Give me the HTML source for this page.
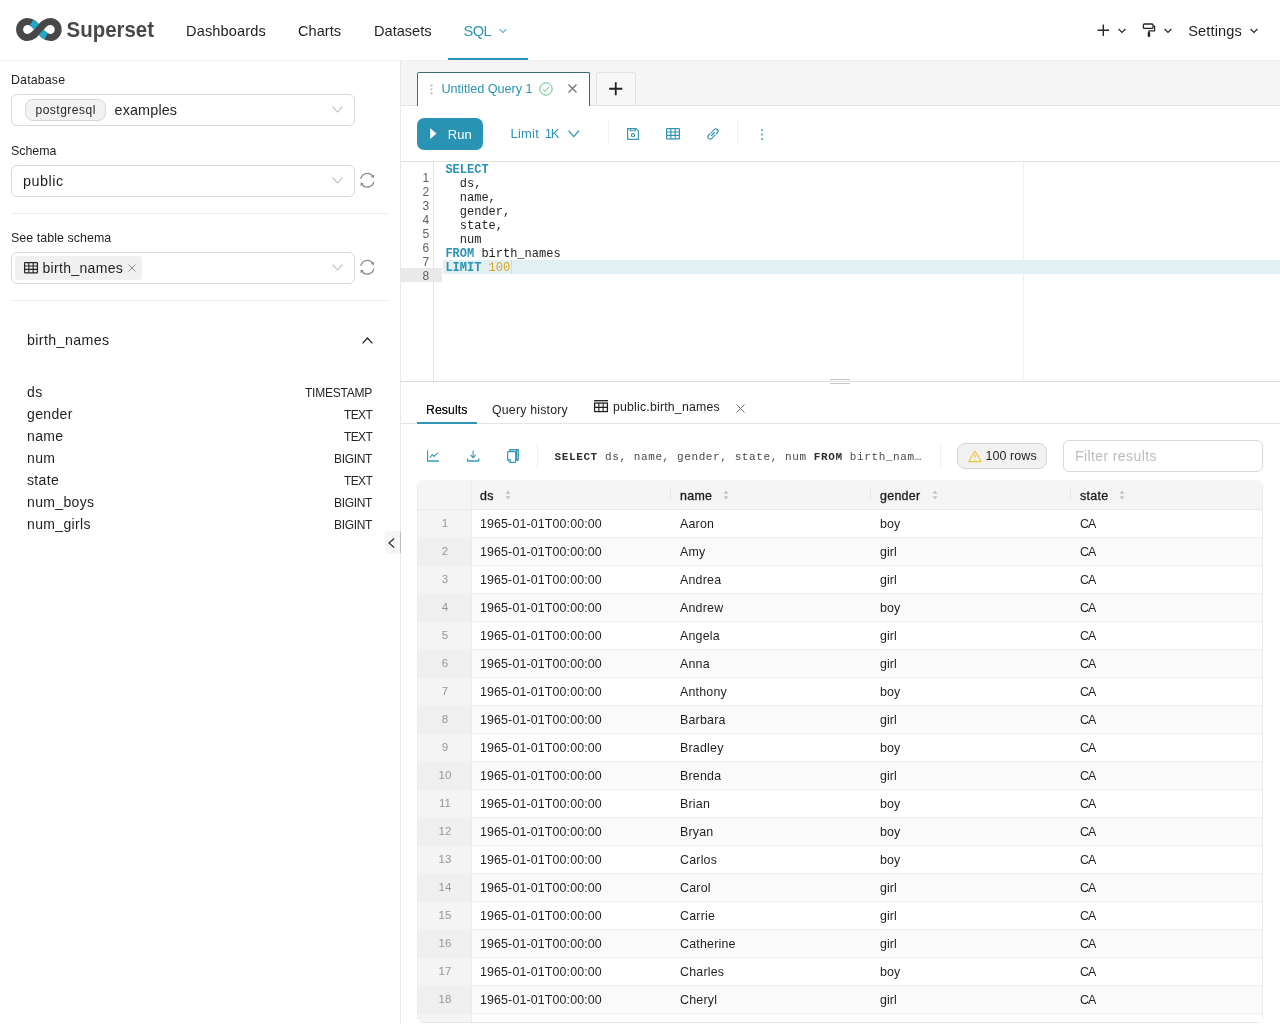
<!DOCTYPE html>
<html lang="en">
<head>
<meta charset="utf-8">
<title>Superset - SQL Lab</title>
<style>
*{box-sizing:border-box;margin:0;padding:0}
html,body{width:1280px;height:1024px;overflow:hidden;background:#fff}
body{font-family:"Liberation Sans",sans-serif;font-size:14px;color:#1f1f1f;position:relative;will-change:transform}
.abs{position:absolute}
.t{position:absolute;white-space:nowrap;line-height:1}
svg{display:block;position:absolute;overflow:visible}
.m{font-family:"Liberation Mono",monospace}

/* navbar */
#nav{left:0;top:0;width:1280px;height:61px;background:#fff;border-bottom:1px solid #f0f0f0}
.navi{font-size:14.6px;color:#1f1f1f;top:23.5px}
#ul{left:448px;top:58px;width:80px;height:2px;background:#2893b3}

/* sidebar */
.lbl{font-size:12.4px;color:#1f1f1f}
.sel{border:1px solid #d9d9d9;border-radius:6px;background:#fff;height:32px;left:11px;width:344px}
.hr{left:11px;width:377px;height:1px;background:#ececec}
.col{font-size:14px;left:27px;color:#1f1f1f;letter-spacing:.35px}
.typ{font-size:12px;color:#262626;text-align:right}

/* right pane */
#tabbar{left:401px;top:61px;width:879px;height:45px;background:#f5f5f5;border-bottom:1px solid #e0e0e0}
#tab1{left:417px;top:72px;width:173px;height:34px;background:#fff;border:1px solid #3a6d78;border-bottom:none;border-radius:2px 2px 0 0}
#tabp{left:596px;top:72px;width:40px;height:33px;background:#f7f7f7;border:1px solid #e2e2e2;border-bottom:none;border-radius:3px 3px 0 0}
#run{left:417px;top:118px;width:66px;height:32px;background:#2893b3;border-radius:7px}
.vd{width:1px;background:#f0f0f0}

/* editor */
.ln{font-family:"Liberation Sans",sans-serif;font-size:12px;color:#616161;width:20px;left:409.2px;text-align:right}
.cl{font-family:"Liberation Mono",monospace;font-size:12px;left:445.4px;color:#1f1f1f;line-height:14px;height:14px;white-space:pre}
.kw{color:#2893b3;font-weight:bold}
.nu{color:#d9a51f}

/* results */
.stab{font-size:12.3px;color:#1f1f1f}
.th{font-size:12.4px;color:#1f1f1f;top:490px;-webkit-text-stroke:.35px #1f1f1f;letter-spacing:.3px}
.td{font-size:12.4px;color:#1f1f1f;letter-spacing:.14px}
.ix{font-size:11.5px;color:#969696;width:40px;left:425px;text-align:center}
.row{left:417px;width:846px;height:28px}
.idx{left:417px;width:54px;height:28px}
</style>
</head>
<body>
<div id="nav" class="abs"></div>
<svg style="left:0;top:0" width="170" height="60" viewBox="0 0 170 60">
<path d="M27.6 21.5 A8 8 0 0 0 27.6 37.5 C32.8 37.5 35.5 33.5 38.9 29.5 C42.3 25.5 45 21.5 50.2 21.5 A8 8 0 0 1 50.2 37.5 C45 37.5 42.3 33.5 38.9 29.5 C35.5 25.5 32.8 21.5 27.6 21.5 Z" fill="none" stroke="#484848" stroke-width="7"/>
<path d="M31.6 22.6 C34.8 24.4 36.8 27 38.9 29.5 C41 32 43 34.6 46.2 36.4" fill="none" stroke="#1fa8c9" stroke-width="7"/>
<path d="M33.4 35.4 C35.4 33.6 37 31.7 38.9 29.5 C40.8 27.3 42.4 25.4 44.4 23.6" fill="none" stroke="#484848" stroke-width="7"/>
<text x="66.6" y="37.4" font-family="Liberation Sans, sans-serif" font-weight="bold" font-size="22.6" fill="#484848" textLength="87.4" lengthAdjust="spacingAndGlyphs">Superset</text>
</svg>
<div class="t navi" style="left:186px;letter-spacing:.12px">Dashboards</div>
<div class="t navi" style="left:298px">Charts</div>
<div class="t navi" style="left:374px">Datasets</div>
<div class="t navi" style="left:463.6px;color:#2893b3;letter-spacing:-.55px">SQL</div>
<svg style="left:499px;top:27.5px" width="8" height="6" viewBox="0 0 8 6"><path d="M.6 1 L4 4.6 L7.4 1" fill="none" stroke="#4aa3bf" stroke-width="1.05"/></svg>
<div id="ul" class="abs"></div>
<svg style="left:1096.7px;top:23.6px" width="13" height="13" viewBox="0 0 13 13"><path d="M6.3 .6 V12 M.6 6.3 H12" stroke="#262626" stroke-width="1.4" fill="none"/></svg>
<svg style="left:1117.5px;top:28px" width="8" height="6" viewBox="0 0 8 6"><path d="M.6 1 L4 4.4 L7.4 1" fill="none" stroke="#1f1f1f" stroke-width="1.1"/></svg>
<svg style="left:1142px;top:23px" width="14" height="15" viewBox="0 0 14 15">
<rect x="1.4" y="1" width="9.6" height="4.4" rx="1" fill="none" stroke="#262626" stroke-width="1.3"/>
<path d="M11 3 H12.6 V7.8 H6.9 V9.4" fill="none" stroke="#262626" stroke-width="1.2" stroke-linejoin="round"/>
<rect x="5.7" y="9" width="2.5" height="5" rx="1" fill="#262626"/>
</svg>
<svg style="left:1163.5px;top:28px" width="8" height="6" viewBox="0 0 8 6"><path d="M.6 1 L4 4.4 L7.4 1" fill="none" stroke="#1f1f1f" stroke-width="1.1"/></svg>
<div class="t navi" style="left:1188.2px;letter-spacing:.12px">Settings</div>
<svg style="left:1250.3px;top:28px" width="8" height="6" viewBox="0 0 8 6"><path d="M.6 1 L4 4.4 L7.4 1" fill="none" stroke="#1f1f1f" stroke-width="1.1"/></svg>
<div class="abs" style="left:400px;top:61px;width:1px;height:963px;background:#e9e9e9"></div>
<div class="t lbl" style="left:11px;top:74px;letter-spacing:.15px">Database</div>
<div class="abs sel" style="top:94px"></div>
<div class="abs" style="left:25px;top:99px;width:81px;height:22px;background:#f2f2f2;border:1px solid #d6d6d6;border-radius:8px"></div>
<div class="t" style="left:35.5px;top:104px;font-size:12px;letter-spacing:.5px;color:#262626">postgresql</div>
<div class="t" style="left:114.5px;top:103.2px;font-size:14.4px;letter-spacing:.14px">examples</div>
<svg style="left:332px;top:105.7px" width="11" height="7" viewBox="0 0 11 7"><path d="M.6 .6 L5.5 6 L10.4 .6" fill="none" stroke="#bdbdbd" stroke-width="1.1"/></svg>
<div class="t lbl" style="left:11px;top:145.3px">Schema</div>
<div class="abs sel" style="top:165px"></div>
<div class="t" style="left:23px;top:174.2px;font-size:14.4px;letter-spacing:.5px">public</div>
<svg style="left:332px;top:176.7px" width="11" height="7" viewBox="0 0 11 7"><path d="M.6 .6 L5.5 6 L10.4 .6" fill="none" stroke="#bdbdbd" stroke-width="1.1"/></svg>
<svg style="left:358.8px;top:172.3px" width="16.6" height="16.6" viewBox="0 0 15 15">
<path d="M1.6 6.2 A6 6 0 0 1 12.6 4.2" fill="none" stroke="#8c8c8c" stroke-width="1.2"/>
<path d="M13.4 8.8 A6 6 0 0 1 2.4 10.8" fill="none" stroke="#8c8c8c" stroke-width="1.2"/>
<path d="M13.8 2.4 L13.4 5.4 L10.6 4.6 Z" fill="#8c8c8c"/>
<path d="M1.2 12.6 L1.6 9.6 L4.4 10.4 Z" fill="#8c8c8c"/>
</svg>
<div class="abs hr" style="top:213px"></div>
<div class="t lbl" style="left:11px;top:232.3px;letter-spacing:.07px">See table schema</div>
<div class="abs sel" style="top:252px"></div>
<div class="abs" style="left:15px;top:256px;width:127px;height:24px;background:#f0f0f0;border-radius:4px"></div>
<svg style="left:24px;top:262.3px" width="14" height="11.4" viewBox="0 0 14 11.4">
<rect x=".6" y=".6" width="12.8" height="10.2" rx=".6" fill="none" stroke="#262626" stroke-width="1.25"/>
<path d="M.6 4.05 H13.4 M.6 7.35 H13.4" stroke="#262626" stroke-width="1.15"/>
<path d="M4.85 .6 V10.8 M9.15 .6 V10.8" stroke="#262626" stroke-width="1.15"/>
</svg>
<div class="t" style="left:42.5px;top:260.5px;font-size:14px;letter-spacing:.32px">birth_names</div>
<svg style="left:128px;top:264.2px" width="8" height="8" viewBox="0 0 8 8"><path d="M.5 .5 L7.5 7.5 M7.5 .5 L.5 7.5" stroke="#8c8c8c" stroke-width="1"/></svg>
<svg style="left:332px;top:263.7px" width="11" height="7" viewBox="0 0 11 7"><path d="M.6 .6 L5.5 6 L10.4 .6" fill="none" stroke="#bdbdbd" stroke-width="1.1"/></svg>
<svg style="left:358.8px;top:259.3px" width="16.6" height="16.6" viewBox="0 0 15 15">
<path d="M1.6 6.2 A6 6 0 0 1 12.6 4.2" fill="none" stroke="#8c8c8c" stroke-width="1.2"/>
<path d="M13.4 8.8 A6 6 0 0 1 2.4 10.8" fill="none" stroke="#8c8c8c" stroke-width="1.2"/>
<path d="M13.8 2.4 L13.4 5.4 L10.6 4.6 Z" fill="#8c8c8c"/>
<path d="M1.2 12.6 L1.6 9.6 L4.4 10.4 Z" fill="#8c8c8c"/>
</svg>
<div class="abs hr" style="top:300px"></div>
<div class="t" style="left:27px;top:332.5px;font-size:14.2px;letter-spacing:.4px">birth_names</div>
<svg style="left:361.5px;top:336.5px" width="11" height="7" viewBox="0 0 11 7"><path d="M.6 6.4 L5.5 1 L10.4 6.4" fill="none" stroke="#1f1f1f" stroke-width="1.2"/></svg>
<div class="t col" style="top:384.6px">ds</div>
<div class="t typ" style="top:387.0px;letter-spacing:-0.25px;right:908.1px">TIMESTAMP</div>
<div class="t col" style="top:406.6px">gender</div>
<div class="t typ" style="top:409.0px;letter-spacing:-0.60px;right:907.8px">TEXT</div>
<div class="t col" style="top:428.6px">name</div>
<div class="t typ" style="top:431.0px;letter-spacing:-0.60px;right:907.8px">TEXT</div>
<div class="t col" style="top:450.6px">num</div>
<div class="t typ" style="top:453.0px;letter-spacing:-0.35px;right:908.0px">BIGINT</div>
<div class="t col" style="top:472.6px">state</div>
<div class="t typ" style="top:475.0px;letter-spacing:-0.60px;right:907.8px">TEXT</div>
<div class="t col" style="top:494.6px">num_boys</div>
<div class="t typ" style="top:497.0px;letter-spacing:-0.35px;right:908.0px">BIGINT</div>
<div class="t col" style="top:516.6px">num_girls</div>
<div class="t typ" style="top:519.0px;letter-spacing:-0.35px;right:908.0px">BIGINT</div>
<div class="abs" style="left:385px;top:531px;width:15px;height:23px;background:#f6f6f6;border-radius:3px 0 0 3px"></div>
<div class="abs" style="left:399.6px;top:532px;width:1.5px;height:21px;background:#bdbdbd"></div>
<svg style="left:388px;top:538px" width="7" height="10" viewBox="0 0 7 10"><path d="M6.2 .5 L.9 5 L6.2 9.5" fill="none" stroke="#262626" stroke-width="1.1"/></svg>
<div id="tabbar" class="abs"></div>
<div id="tab1" class="abs"></div>
<svg style="left:430px;top:84px" width="3" height="11" viewBox="0 0 3 11"><circle cx="1.5" cy="1.5" r="1.15" fill="#c2c2c2"/><circle cx="1.5" cy="5.5" r="1.15" fill="#c2c2c2"/><circle cx="1.5" cy="9.5" r="1.15" fill="#c2c2c2"/></svg>
<div class="t" style="left:441.5px;top:82.5px;font-size:12.6px;color:#2893b3;letter-spacing:0">Untitled Query 1</div>
<svg style="left:539px;top:82.3px" width="14" height="14" viewBox="0 0 14 14">
<circle cx="7" cy="7" r="6.2" fill="none" stroke="#5ac189" stroke-width="1"/>
<path d="M4 7.2 L6.2 9.4 L10 4.8" fill="none" stroke="#5ac189" stroke-width="1"/></svg>
<svg style="left:568.4px;top:84.4px" width="9" height="9" viewBox="0 0 9 9"><path d="M.5 .5 L8.5 8.5 M8.5 .5 L.5 8.5" stroke="#6e6e6e" stroke-width="1.15"/></svg>
<div id="tabp" class="abs"></div>
<svg style="left:609.3px;top:82.4px" width="13.5" height="13.5" viewBox="0 0 13.5 13.5"><path d="M6.75 .2 V13.3 M.2 6.75 H13.3" stroke="#222" stroke-width="1.8"/></svg>
<div id="run" class="abs"></div>
<svg style="left:430px;top:128.4px" width="7" height="11.2" viewBox="0 0 7 11.2"><path d="M.2 .2 L6.5 5.6 L.2 11 Z" fill="#fff"/></svg>
<div class="t" style="left:447.8px;top:127.8px;font-size:13px;color:#fff;letter-spacing:.1px">Run</div>
<div class="t" style="left:510.5px;top:126.8px;font-size:13px;color:#2893b3;letter-spacing:.2px">Limit</div>
<div class="t" style="left:544.8px;top:126.8px;font-size:13px;color:#2893b3;letter-spacing:-1.3px">1K</div>
<svg style="left:568.2px;top:130.2px" width="11.6" height="7.6" viewBox="0 0 11.6 7.6"><path d="M.6 .6 L5.8 6.6 L11 .6" fill="none" stroke="#2893b3" stroke-width="1.3"/></svg>
<div class="abs vd" style="left:608px;top:121px;height:24px"></div>
<svg style="left:627px;top:128px" width="12" height="12" viewBox="0 0 12 12">
<path d="M.6 .6 H9.2 L11.4 2.8 V11.4 H.6 Z" fill="none" stroke="#3494b2" stroke-width="1.15" stroke-linejoin="round"/>
<path d="M3.2 .8 V2.8 H8.2 V.8" fill="none" stroke="#3494b2" stroke-width="1.1"/>
<circle cx="6" cy="7.2" r="1.6" fill="none" stroke="#3494b2" stroke-width="1.1"/></svg>
<svg style="left:666px;top:128.1px" width="14" height="11.4" viewBox="0 0 14 11.4">
<rect x=".6" y=".6" width="12.8" height="10.2" rx=".6" fill="none" stroke="#3494b2" stroke-width="1.25"/>
<path d="M.6 4.05 H13.4 M.6 7.35 H13.4" stroke="#3494b2" stroke-width="1.15"/>
<path d="M4.85 .6 V10.8 M9.15 .6 V10.8" stroke="#3494b2" stroke-width="1.15"/>
</svg>
<svg style="left:707px;top:128px" width="12" height="12" viewBox="0 0 12 12">
<g fill="none" stroke="#3494b2" stroke-width="1.15" stroke-linecap="round" transform="rotate(-45 6 6)">
<path d="M5.4 3.8 H10 A2.2 2.2 0 0 1 10 8.2 H8.2"/>
<path d="M6.6 8.2 H2 A2.2 2.2 0 0 1 2 3.8 H3.8"/>
<path d="M3.9 6 H8.1"/>
</g></svg>
<div class="abs vd" style="left:737px;top:121px;height:24px"></div>
<svg style="left:761px;top:128.6px" width="2" height="11" viewBox="0 0 2 11"><circle cx="1" cy="1" r=".9" fill="#2893b3"/><circle cx="1" cy="5.5" r=".9" fill="#2893b3"/><circle cx="1" cy="10" r=".9" fill="#2893b3"/></svg>
<div class="abs" style="left:401px;top:161px;width:879px;height:1px;background:#e0e0e0"></div>
<div class="abs" style="left:401px;top:381px;width:879px;height:1px;background:#dcdcdc"></div>
<div class="abs" style="left:433px;top:162px;width:1px;height:219px;background:#e4e4e4"></div>
<div class="abs" style="left:1023px;top:162px;width:1px;height:219px;background:#f0f0f0"></div>
<div class="abs" style="left:401px;top:268px;width:40.5px;height:13.6px;background:#e9e9e9"></div>
<div class="abs" style="left:442.5px;top:260.2px;width:837.5px;height:13.4px;background:#e2eff3"></div>
<div class="abs cl" style="top:163.3px"><span class="kw">SELECT</span></div>
<div class="t ln" style="top:171.5px">1</div>
<div class="abs cl" style="top:177.3px">  ds,</div>
<div class="t ln" style="top:185.5px">2</div>
<div class="abs cl" style="top:191.3px">  name,</div>
<div class="t ln" style="top:199.5px">3</div>
<div class="abs cl" style="top:205.3px">  gender,</div>
<div class="t ln" style="top:213.5px">4</div>
<div class="abs cl" style="top:219.3px">  state,</div>
<div class="t ln" style="top:227.5px">5</div>
<div class="abs cl" style="top:233.3px">  num</div>
<div class="t ln" style="top:241.5px">6</div>
<div class="abs cl" style="top:247.3px"><span class="kw">FROM</span> birth_names</div>
<div class="t ln" style="top:255.5px">7</div>
<div class="abs cl" style="top:261.3px"><span class="kw">LIMIT</span> <span class="nu">100</span></div>
<div class="t ln" style="top:269.5px">8</div>
<div class="abs" style="left:511px;top:260px;width:1px;height:14px;background:#c9dbe1"></div>
<div class="abs" style="left:830px;top:379px;width:20px;height:1px;background:#c4c4c4"></div>
<div class="abs" style="left:830px;top:383px;width:20px;height:1px;background:#c4c4c4"></div>
<div class="abs" style="left:401px;top:423px;width:879px;height:1px;background:#e4e4e4"></div>
<div class="abs" style="left:417px;top:422px;width:60px;height:2px;background:#2f95b3"></div>
<div class="t stab" style="left:426px;top:403.6px;text-shadow:0 0 .4px #1f1f1f;letter-spacing:.05px;color:#141414">Results</div>
<div class="t stab" style="left:492px;top:403.6px;letter-spacing:.22px">Query history</div>
<svg style="left:594px;top:399.9px" width="14" height="12.2" viewBox="0 0 14 12.2">
<path d="M0 .7 H14" stroke="#1f1f1f" stroke-width="1.3"/>
<rect x=".6" y="3.1" width="12.8" height="8.5" fill="none" stroke="#1f1f1f" stroke-width="1.25"/>
<path d="M.6 7.35 H13.4 M4.85 3.1 V11.6 M9.15 3.1 V11.6" stroke="#1f1f1f" stroke-width="1.1"/>
</svg>
<div class="t stab" style="left:613px;top:400.8px;letter-spacing:.2px">public.birth_names</div>
<svg style="left:735.5px;top:404.2px" width="9" height="9" viewBox="0 0 9 9"><path d="M.5 .5 L8.5 8.5 M8.5 .5 L.5 8.5" stroke="#6a6a6a" stroke-width="1"/></svg>
<svg style="left:427px;top:450px" width="12" height="12" viewBox="0 0 12 12">
<path d="M.6 .3 V11" fill="none" stroke="#3a9ab8" stroke-width="1.1"/>
<path d="M.1 11 H11.9" fill="none" stroke="#3a9ab8" stroke-width="1.5"/>
<path d="M2.8 7.6 L5.4 4.6 L7 6.4 L10.8 2.8" fill="none" stroke="#3a9ab8" stroke-width="1.1"/></svg>
<svg style="left:467px;top:450px" width="12.4" height="12" viewBox="0 0 12.4 12">
<path d="M6.1 .6 V7.4 M3.6 5 L6.1 7.6 L8.6 5" fill="none" stroke="#3a9ab8" stroke-width="1.1"/>
<path d="M.6 8.4 V11 H11.8 V8.4" fill="none" stroke="#3a9ab8" stroke-width="1.3" stroke-linejoin="round"/></svg>
<svg style="left:507px;top:448.8px" width="12" height="14" viewBox="0 0 12 14">
<path d="M2.8 2.4 V.7 H11.2 V11 H9.4" fill="none" stroke="#3a9ab8" stroke-width="1.4"/>
<path d="M9.6 1 V11 H11" fill="none" stroke="#3a9ab8" stroke-width="1.2"/>
<path d="M.7 2.7 H8.6 V13.3 H3.2 L.7 10.8 Z" fill="#fff" stroke="#3a9ab8" stroke-width="1.2" stroke-linejoin="round"/>
<path d="M.8 10.6 H3.4 V13.2" fill="none" stroke="#3a9ab8" stroke-width="1"/></svg>
<div class="abs vd" style="left:537px;top:443px;height:26px"></div>
<div class="t m" style="left:554.6px;top:451.9px;font-size:11px;letter-spacing:.6px;color:#4a4a4a"><b style="color:#303030">SELECT</b> ds, name, gender, state, num <b style="color:#303030">FROM</b> birth_nam…</div>
<div class="abs vd" style="left:940px;top:443px;height:26px"></div>
<div class="abs" style="left:957px;top:443px;width:90px;height:26px;background:#f1f1f1;border:1px solid #d6d6d6;border-radius:8px"></div>
<svg style="left:968px;top:450px" width="14" height="12.4" viewBox="0 0 14 12.4">
<path d="M7 1 L13.2 11.6 H.8 Z" fill="none" stroke="#ecc62a" stroke-width="1.1" stroke-linejoin="round"/>
<path d="M7 4.6 V8" stroke="#ecc62a" stroke-width="1.1"/><circle cx="7" cy="9.7" r=".65" fill="#ecc62a"/></svg>
<div class="t" style="left:985.6px;top:449.8px;font-size:12.5px;color:#1f1f1f;letter-spacing:.05px">100 rows</div>
<div class="abs" style="left:1063px;top:440px;width:200px;height:32px;border:1px solid #d9d9d9;border-radius:6px;background:#fff"></div>
<div class="t" style="left:1075px;top:448.5px;font-size:14px;color:#bcbcbc;letter-spacing:.4px">Filter results</div>
<div class="abs" style="left:417px;top:480px;width:846px;height:543px;border-radius:7px;overflow:hidden;background:#fff;border:1px solid #efefef">
</div>
<div class="abs" style="left:417px;top:480px;width:846px;height:543px;border-radius:7px;overflow:hidden">
<div class="abs" style="left:0;top:0;width:846px;height:29px;background:#f5f5f5"></div>
<div class="abs" style="left:0;top:29px;width:846px;height:1px;background:#e9e9e9"></div>
<div class="abs" style="left:0;top:29.5px;width:846px;height:28px;background:#fff"></div>
<div class="abs" style="left:0;top:29.5px;width:54px;height:28px;background:#f4f4f4"></div>
<div class="abs" style="left:0;top:57.0px;width:846px;height:1px;background:#efefef"></div>
<div class="abs" style="left:0;top:57.5px;width:846px;height:28px;background:#fafafa"></div>
<div class="abs" style="left:0;top:57.5px;width:54px;height:28px;background:#efefef"></div>
<div class="abs" style="left:0;top:85.0px;width:846px;height:1px;background:#efefef"></div>
<div class="abs" style="left:0;top:85.5px;width:846px;height:28px;background:#fff"></div>
<div class="abs" style="left:0;top:85.5px;width:54px;height:28px;background:#f4f4f4"></div>
<div class="abs" style="left:0;top:113.0px;width:846px;height:1px;background:#efefef"></div>
<div class="abs" style="left:0;top:113.5px;width:846px;height:28px;background:#fafafa"></div>
<div class="abs" style="left:0;top:113.5px;width:54px;height:28px;background:#efefef"></div>
<div class="abs" style="left:0;top:141.0px;width:846px;height:1px;background:#efefef"></div>
<div class="abs" style="left:0;top:141.5px;width:846px;height:28px;background:#fff"></div>
<div class="abs" style="left:0;top:141.5px;width:54px;height:28px;background:#f4f4f4"></div>
<div class="abs" style="left:0;top:169.0px;width:846px;height:1px;background:#efefef"></div>
<div class="abs" style="left:0;top:169.5px;width:846px;height:28px;background:#fafafa"></div>
<div class="abs" style="left:0;top:169.5px;width:54px;height:28px;background:#efefef"></div>
<div class="abs" style="left:0;top:197.0px;width:846px;height:1px;background:#efefef"></div>
<div class="abs" style="left:0;top:197.5px;width:846px;height:28px;background:#fff"></div>
<div class="abs" style="left:0;top:197.5px;width:54px;height:28px;background:#f4f4f4"></div>
<div class="abs" style="left:0;top:225.0px;width:846px;height:1px;background:#efefef"></div>
<div class="abs" style="left:0;top:225.5px;width:846px;height:28px;background:#fafafa"></div>
<div class="abs" style="left:0;top:225.5px;width:54px;height:28px;background:#efefef"></div>
<div class="abs" style="left:0;top:253.0px;width:846px;height:1px;background:#efefef"></div>
<div class="abs" style="left:0;top:253.5px;width:846px;height:28px;background:#fff"></div>
<div class="abs" style="left:0;top:253.5px;width:54px;height:28px;background:#f4f4f4"></div>
<div class="abs" style="left:0;top:281.0px;width:846px;height:1px;background:#efefef"></div>
<div class="abs" style="left:0;top:281.5px;width:846px;height:28px;background:#fafafa"></div>
<div class="abs" style="left:0;top:281.5px;width:54px;height:28px;background:#efefef"></div>
<div class="abs" style="left:0;top:309.0px;width:846px;height:1px;background:#efefef"></div>
<div class="abs" style="left:0;top:309.5px;width:846px;height:28px;background:#fff"></div>
<div class="abs" style="left:0;top:309.5px;width:54px;height:28px;background:#f4f4f4"></div>
<div class="abs" style="left:0;top:337.0px;width:846px;height:1px;background:#efefef"></div>
<div class="abs" style="left:0;top:337.5px;width:846px;height:28px;background:#fafafa"></div>
<div class="abs" style="left:0;top:337.5px;width:54px;height:28px;background:#efefef"></div>
<div class="abs" style="left:0;top:365.0px;width:846px;height:1px;background:#efefef"></div>
<div class="abs" style="left:0;top:365.5px;width:846px;height:28px;background:#fff"></div>
<div class="abs" style="left:0;top:365.5px;width:54px;height:28px;background:#f4f4f4"></div>
<div class="abs" style="left:0;top:393.0px;width:846px;height:1px;background:#efefef"></div>
<div class="abs" style="left:0;top:393.5px;width:846px;height:28px;background:#fafafa"></div>
<div class="abs" style="left:0;top:393.5px;width:54px;height:28px;background:#efefef"></div>
<div class="abs" style="left:0;top:421.0px;width:846px;height:1px;background:#efefef"></div>
<div class="abs" style="left:0;top:421.5px;width:846px;height:28px;background:#fff"></div>
<div class="abs" style="left:0;top:421.5px;width:54px;height:28px;background:#f4f4f4"></div>
<div class="abs" style="left:0;top:449.0px;width:846px;height:1px;background:#efefef"></div>
<div class="abs" style="left:0;top:449.5px;width:846px;height:28px;background:#fafafa"></div>
<div class="abs" style="left:0;top:449.5px;width:54px;height:28px;background:#efefef"></div>
<div class="abs" style="left:0;top:477.0px;width:846px;height:1px;background:#efefef"></div>
<div class="abs" style="left:0;top:477.5px;width:846px;height:28px;background:#fff"></div>
<div class="abs" style="left:0;top:477.5px;width:54px;height:28px;background:#f4f4f4"></div>
<div class="abs" style="left:0;top:505.0px;width:846px;height:1px;background:#efefef"></div>
<div class="abs" style="left:0;top:505.5px;width:846px;height:28px;background:#fafafa"></div>
<div class="abs" style="left:0;top:505.5px;width:54px;height:28px;background:#efefef"></div>
<div class="abs" style="left:0;top:533.0px;width:846px;height:1px;background:#efefef"></div>
<div class="abs" style="left:0;top:533.5px;width:846px;height:28px;background:#fff"></div>
<div class="abs" style="left:0;top:533.5px;width:54px;height:28px;background:#f4f4f4"></div>
<div class="abs" style="left:0;top:561.0px;width:846px;height:1px;background:#efefef"></div>
<div class="abs" style="left:54px;top:0;width:1px;height:543px;background:#ebebeb"></div>
<div class="abs" style="left:0;top:0;width:1px;height:543px;background:#ececec"></div>
<div class="abs" style="left:845px;top:0;width:1px;height:543px;background:#ececec"></div>
<div class="abs" style="left:0;top:542px;width:846px;height:1px;background:#e4e4e4"></div>
</div>
<div class="t th" style="left:480px">ds</div>
<svg style="left:505px;top:490.3px" width="6" height="10" viewBox="0 0 6 10"><path d="M3 .4 L5.6 3.8 H.4 Z M3 9.6 L5.6 6.2 H.4 Z" fill="#c4c4c4"/></svg>
<div class="t th" style="left:680px">name</div>
<svg style="left:723px;top:490.3px" width="6" height="10" viewBox="0 0 6 10"><path d="M3 .4 L5.6 3.8 H.4 Z M3 9.6 L5.6 6.2 H.4 Z" fill="#c4c4c4"/></svg>
<div class="t th" style="left:880px">gender</div>
<svg style="left:932px;top:490.3px" width="6" height="10" viewBox="0 0 6 10"><path d="M3 .4 L5.6 3.8 H.4 Z M3 9.6 L5.6 6.2 H.4 Z" fill="#c4c4c4"/></svg>
<div class="t th" style="left:1080px">state</div>
<svg style="left:1119px;top:490.3px" width="6" height="10" viewBox="0 0 6 10"><path d="M3 .4 L5.6 3.8 H.4 Z M3 9.6 L5.6 6.2 H.4 Z" fill="#c4c4c4"/></svg>
<div class="abs" style="left:669.5px;top:489px;width:1px;height:11px;background:#e6e6e6"></div>
<div class="abs" style="left:869.5px;top:489px;width:1px;height:11px;background:#e6e6e6"></div>
<div class="abs" style="left:1069.5px;top:489px;width:1px;height:11px;background:#e6e6e6"></div>
<div class="t ix" style="top:517.8px">1</div>
<div class="t td" style="left:480px;top:517.8px">1965-01-01T00:00:00</div>
<div class="t td" style="left:680px;top:517.8px;letter-spacing:.22px">Aaron</div>
<div class="t td" style="left:880px;top:517.8px;letter-spacing:.05px">boy</div>
<div class="t td" style="left:1080px;top:517.8px;letter-spacing:-.85px">CA</div>
<div class="t ix" style="top:545.8px">2</div>
<div class="t td" style="left:480px;top:545.8px">1965-01-01T00:00:00</div>
<div class="t td" style="left:680px;top:545.8px;letter-spacing:.22px">Amy</div>
<div class="t td" style="left:880px;top:545.8px;letter-spacing:.05px">girl</div>
<div class="t td" style="left:1080px;top:545.8px;letter-spacing:-.85px">CA</div>
<div class="t ix" style="top:573.8px">3</div>
<div class="t td" style="left:480px;top:573.8px">1965-01-01T00:00:00</div>
<div class="t td" style="left:680px;top:573.8px;letter-spacing:.22px">Andrea</div>
<div class="t td" style="left:880px;top:573.8px;letter-spacing:.05px">girl</div>
<div class="t td" style="left:1080px;top:573.8px;letter-spacing:-.85px">CA</div>
<div class="t ix" style="top:601.8px">4</div>
<div class="t td" style="left:480px;top:601.8px">1965-01-01T00:00:00</div>
<div class="t td" style="left:680px;top:601.8px;letter-spacing:.22px">Andrew</div>
<div class="t td" style="left:880px;top:601.8px;letter-spacing:.05px">boy</div>
<div class="t td" style="left:1080px;top:601.8px;letter-spacing:-.85px">CA</div>
<div class="t ix" style="top:629.8px">5</div>
<div class="t td" style="left:480px;top:629.8px">1965-01-01T00:00:00</div>
<div class="t td" style="left:680px;top:629.8px;letter-spacing:.22px">Angela</div>
<div class="t td" style="left:880px;top:629.8px;letter-spacing:.05px">girl</div>
<div class="t td" style="left:1080px;top:629.8px;letter-spacing:-.85px">CA</div>
<div class="t ix" style="top:657.8px">6</div>
<div class="t td" style="left:480px;top:657.8px">1965-01-01T00:00:00</div>
<div class="t td" style="left:680px;top:657.8px;letter-spacing:.22px">Anna</div>
<div class="t td" style="left:880px;top:657.8px;letter-spacing:.05px">girl</div>
<div class="t td" style="left:1080px;top:657.8px;letter-spacing:-.85px">CA</div>
<div class="t ix" style="top:685.8px">7</div>
<div class="t td" style="left:480px;top:685.8px">1965-01-01T00:00:00</div>
<div class="t td" style="left:680px;top:685.8px;letter-spacing:.22px">Anthony</div>
<div class="t td" style="left:880px;top:685.8px;letter-spacing:.05px">boy</div>
<div class="t td" style="left:1080px;top:685.8px;letter-spacing:-.85px">CA</div>
<div class="t ix" style="top:713.8px">8</div>
<div class="t td" style="left:480px;top:713.8px">1965-01-01T00:00:00</div>
<div class="t td" style="left:680px;top:713.8px;letter-spacing:.22px">Barbara</div>
<div class="t td" style="left:880px;top:713.8px;letter-spacing:.05px">girl</div>
<div class="t td" style="left:1080px;top:713.8px;letter-spacing:-.85px">CA</div>
<div class="t ix" style="top:741.8px">9</div>
<div class="t td" style="left:480px;top:741.8px">1965-01-01T00:00:00</div>
<div class="t td" style="left:680px;top:741.8px;letter-spacing:.22px">Bradley</div>
<div class="t td" style="left:880px;top:741.8px;letter-spacing:.05px">boy</div>
<div class="t td" style="left:1080px;top:741.8px;letter-spacing:-.85px">CA</div>
<div class="t ix" style="top:769.8px">10</div>
<div class="t td" style="left:480px;top:769.8px">1965-01-01T00:00:00</div>
<div class="t td" style="left:680px;top:769.8px;letter-spacing:.22px">Brenda</div>
<div class="t td" style="left:880px;top:769.8px;letter-spacing:.05px">girl</div>
<div class="t td" style="left:1080px;top:769.8px;letter-spacing:-.85px">CA</div>
<div class="t ix" style="top:797.8px">11</div>
<div class="t td" style="left:480px;top:797.8px">1965-01-01T00:00:00</div>
<div class="t td" style="left:680px;top:797.8px;letter-spacing:.22px">Brian</div>
<div class="t td" style="left:880px;top:797.8px;letter-spacing:.05px">boy</div>
<div class="t td" style="left:1080px;top:797.8px;letter-spacing:-.85px">CA</div>
<div class="t ix" style="top:825.8px">12</div>
<div class="t td" style="left:480px;top:825.8px">1965-01-01T00:00:00</div>
<div class="t td" style="left:680px;top:825.8px;letter-spacing:.22px">Bryan</div>
<div class="t td" style="left:880px;top:825.8px;letter-spacing:.05px">boy</div>
<div class="t td" style="left:1080px;top:825.8px;letter-spacing:-.85px">CA</div>
<div class="t ix" style="top:853.8px">13</div>
<div class="t td" style="left:480px;top:853.8px">1965-01-01T00:00:00</div>
<div class="t td" style="left:680px;top:853.8px;letter-spacing:.22px">Carlos</div>
<div class="t td" style="left:880px;top:853.8px;letter-spacing:.05px">boy</div>
<div class="t td" style="left:1080px;top:853.8px;letter-spacing:-.85px">CA</div>
<div class="t ix" style="top:881.8px">14</div>
<div class="t td" style="left:480px;top:881.8px">1965-01-01T00:00:00</div>
<div class="t td" style="left:680px;top:881.8px;letter-spacing:.22px">Carol</div>
<div class="t td" style="left:880px;top:881.8px;letter-spacing:.05px">girl</div>
<div class="t td" style="left:1080px;top:881.8px;letter-spacing:-.85px">CA</div>
<div class="t ix" style="top:909.8px">15</div>
<div class="t td" style="left:480px;top:909.8px">1965-01-01T00:00:00</div>
<div class="t td" style="left:680px;top:909.8px;letter-spacing:.22px">Carrie</div>
<div class="t td" style="left:880px;top:909.8px;letter-spacing:.05px">girl</div>
<div class="t td" style="left:1080px;top:909.8px;letter-spacing:-.85px">CA</div>
<div class="t ix" style="top:937.8px">16</div>
<div class="t td" style="left:480px;top:937.8px">1965-01-01T00:00:00</div>
<div class="t td" style="left:680px;top:937.8px;letter-spacing:.22px">Catherine</div>
<div class="t td" style="left:880px;top:937.8px;letter-spacing:.05px">girl</div>
<div class="t td" style="left:1080px;top:937.8px;letter-spacing:-.85px">CA</div>
<div class="t ix" style="top:965.8px">17</div>
<div class="t td" style="left:480px;top:965.8px">1965-01-01T00:00:00</div>
<div class="t td" style="left:680px;top:965.8px;letter-spacing:.22px">Charles</div>
<div class="t td" style="left:880px;top:965.8px;letter-spacing:.05px">boy</div>
<div class="t td" style="left:1080px;top:965.8px;letter-spacing:-.85px">CA</div>
<div class="t ix" style="top:993.8px">18</div>
<div class="t td" style="left:480px;top:993.8px">1965-01-01T00:00:00</div>
<div class="t td" style="left:680px;top:993.8px;letter-spacing:.22px">Cheryl</div>
<div class="t td" style="left:880px;top:993.8px;letter-spacing:.05px">girl</div>
<div class="t td" style="left:1080px;top:993.8px;letter-spacing:-.85px">CA</div>
<div class="abs" style="left:417px;top:1000px;width:846px;height:22.6px;overflow:hidden">
<div class="t td" style="left:63px;top:21.8px">1965-01-01T00:00:00</div>
<div class="t td" style="left:263px;top:21.8px;letter-spacing:.22px">Christine</div>
<div class="t td" style="left:463px;top:21.8px;letter-spacing:.05px">girl</div>
</div>
</body>
</html>
